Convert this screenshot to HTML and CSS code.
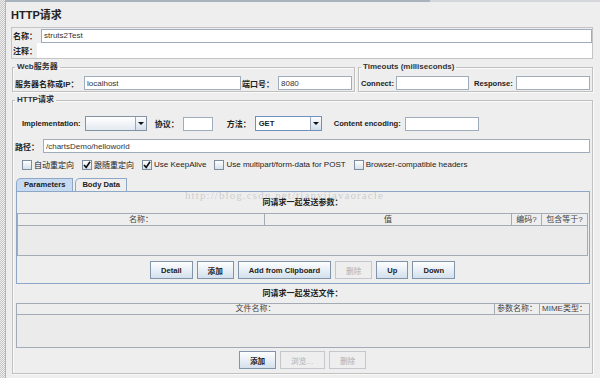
FILE: index.html
```html
<!DOCTYPE html>
<html lang="zh-CN">
<head>
    <meta charset="UTF-8">
    <meta name="viewport" content="width=device-width, initial-scale=1.0">
    <title>HTTP请求</title>
    <link rel="stylesheet" href="styles.css">
</head>
<body>
    <div class="window">
        <!-- barra lateral pontilhada -->
        <div class="sidebar"></div>

        <div class="main">
            <div class="topbar"></div>
            <h1 class="title">HTTP请求</h1>

            <!-- nome e comentário -->
            <div class="name-box">
                <div class="name-row">
                    <span class="label name-label">名称：</span>
                    <input class="text-field grow" type="text" value="struts2Test">
                </div>
                <div class="name-row">
                    <span class="label comment-label">注释：</span>
                    <input class="plain-field" type="text" value="">
                </div>
            </div>

            <div class="server-row">
                <fieldset class="group web-group">
                    <legend>Web服务器</legend>
                    <div class="field-row">
                        <span class="label server-label">服务器名称或IP：</span>
                        <input class="text-field server-field" type="text" value="localhost">
                        <span class="label port-label">端口号：</span>
                        <input class="text-field grow" type="text" value="8080">
                    </div>
                </fieldset>
                <fieldset class="group timeout-group">
                    <legend>Timeouts (milliseconds)</legend>
                    <div class="field-row">
                        <span class="label en connect-label">Connect:</span>
                        <input class="text-field timeout-field" type="text">
                        <span class="label en response-label">Response:</span>
                        <input class="text-field grow" type="text">
                    </div>
                </fieldset>
            </div>

            <fieldset class="group http-group">
                <legend>HTTP请求</legend>

                <div class="request-row">
                    <span class="label en">Implementation:</span>
                    <div class="combo impl-combo">
                        <span class="combo-value"></span>
                        <span class="combo-arrow"></span>
                    </div>
                    <span class="label protocol-label">协议：</span>
                    <input class="text-field protocol-field" type="text">
                    <span class="label method-label">方法：</span>
                    <div class="combo method-combo">
                        <span class="combo-value">GET</span>
                        <span class="combo-arrow"></span>
                    </div>
                    <span class="label en encoding-label">Content encoding:</span>
                    <input class="text-field encoding-field" type="text">
                </div>

                <div class="path-row">
                    <span class="label">路径：</span>
                    <input class="text-field grow" type="text" value="/chartsDemo/helloworld">
                </div>

                <div class="check-row">
                    <label class="check"><span class="box"></span>自动重定向</label>
                    <label class="check"><span class="box"><svg width="8" height="8" viewBox="0 0 8 8"><path d="M1 4 L3.2 6.4 L7 0.8" /></svg></span>跟随重定向</label>
                    <label class="check"><span class="box"><svg width="8" height="8" viewBox="0 0 8 8"><path d="M1 4 L3.2 6.4 L7 0.8" /></svg></span>Use KeepAlive</label>
                    <label class="check"><span class="box"></span>Use multipart/form-data for POST</label>
                    <label class="check"><span class="box"></span>Browser-compatible headers</label>
                </div>

                <!-- abas -->
                <div class="tabs">
                    <span class="tab active">Parameters</span>
                    <span class="tab">Body Data</span>
                </div>
                <div class="tab-panel">
                    <div class="watermark">http://blog.csdn.net/tianyijavaoracle</div>
                    <div class="section-title">同请求一起发送参数：</div>
                    <div class="table">
                        <div class="table-head">
                            <span class="cell col-name">名称：</span>
                            <span class="cell col-value">值</span>
                            <span class="cell col-encode">编码?</span>
                            <span class="cell col-equals">包含等于?</span>
                        </div>
                        <div class="table-body params-body"></div>
                    </div>
                    <div class="button-row">
                        <button class="btn">Detail</button>
                        <button class="btn">添加</button>
                        <button class="btn">Add from Clipboard</button>
                        <button class="btn disabled">删除</button>
                        <button class="btn">Up</button>
                        <button class="btn">Down</button>
                    </div>
                </div>

                <div class="section-title files-title">同请求一起发送文件：</div>
                <div class="table files-table">
                    <div class="table-head">
                        <span class="cell col-file">文件名称：</span>
                        <span class="cell col-param">参数名称：</span>
                        <span class="cell col-mime">MIME类型：</span>
                    </div>
                    <div class="table-body files-body"></div>
                </div>
                <div class="button-row files-buttons">
                    <button class="btn">添加</button>
                    <button class="btn disabled">浏览…</button>
                    <button class="btn disabled">删除</button>
                </div>
            </fieldset>
        </div>
    </div>
</body>
</html>
```

FILE: styles.css
```css
/* Reset básico */
* {
    margin: 0;
    padding: 0;
    box-sizing: border-box;
}

body {
    font-family: "Liberation Sans", "Noto Sans CJK SC", sans-serif;
    font-size: 8px;
    color: #222;
    background: #eeeeee;
    width: 600px;
    height: 378px;
    overflow: hidden;
}

.window {
    display: flex;
    height: 378px;
}

/* Barra lateral pontilhada */
.sidebar {
    flex: none;
    width: 6px;
    background: repeating-conic-gradient(#c6c6c6 0 25%, #eeeeee 0 50%) 0 0 / 2px 2px;
    border-right: 1px solid #b4b4b4;
}

.main {
    flex: 1;
    min-width: 0;
    padding: 0 7px 0 5px;
}

.topbar {
    height: 2px;
    margin: 0 -7px 0 -5px;
    background: linear-gradient(to right, #a9b3bd 0 424px, #d3d7db 424px);
}

.title {
    margin-top: 5px;
    font-size: 11px;
    line-height: 16px;
    font-weight: bold;
    color: #222;
}

.label {
    flex: none;
    font-weight: bold;
    white-space: nowrap;
}

.label.en {
    font-size: 7.6px;
}

input {
    font: inherit;
    color: #333;
    outline: none;
}

.text-field {
    flex: none;
    height: 14px;
    border: 1px solid #9eacbb;
    background: #fff;
    padding: 0 2px;
}

.grow {
    flex: 1 1 0;
    min-width: 0;
}

/* Nome e comentário */
.name-box {
    margin-top: 4px;
    border: 1px solid #c4c4c4;
}

.name-row {
    display: flex;
    align-items: center;
    height: 15px;
}

.name-label {
    width: 29px;
    padding-left: 1px;
}

.comment-label {
    width: 25px;
    padding-left: 1px;
}

.plain-field {
    flex: 1 1 0;
    min-width: 0;
    height: 15px;
    border: none;
    background: #fff;
}

/* Grupos */
.server-row {
    display: flex;
    gap: 3px;
    margin-top: 3px;
    margin-left: 1px;
}

.group {
    border: 1px solid #c0c0c0;
    box-shadow: inset 1px 1px 0 #fafafa, 1px 1px 0 #fafafa;
    padding: 4px 2px 1px 2px;
    min-width: 0;
}

.group legend {
    font-weight: bold;
    font-size: 8px;
    line-height: 10px;
    padding: 0 2px;
    color: #333;
}

.web-group {
    flex: 0 0 343px;
}

.timeout-group {
    flex: 1;
}

.field-row {
    display: flex;
    align-items: center;
    height: 14px;
}

.server-label {
    width: 69px;
}

.server-field {
    width: 157px;
}

.port-label {
    width: 37px;
    padding-left: 1px;
}

.connect-label {
    width: 35px;
}

.timeout-field {
    width: 73px;
}

.response-label {
    width: 42px;
    margin-left: 5px;
}

/* Grupo HTTP */
.http-group {
    margin-top: 3px;
    margin-left: 1px;
    padding: 11px 2px 4px 2px;
}

.request-row {
    display: flex;
    align-items: center;
    gap: 4px;
    height: 15px;
    padding-left: 7px;
}

.combo {
    flex: none;
    display: flex;
    height: 15px;
    border: 1px solid #8493a3;
    background: linear-gradient(#ffffff, #e3e9f0);
}

.combo-value {
    flex: 1;
    padding-left: 3px;
    line-height: 13px;
    font-weight: bold;
    font-size: 7.6px;
}

.combo-arrow {
    width: 11px;
    border-left: 1px solid #9aa9b8;
    background: linear-gradient(#fbfdff, #d3dfeb);
    display: flex;
    align-items: center;
    justify-content: center;
}

.combo-arrow::after {
    content: "";
    border-left: 3px solid transparent;
    border-right: 3px solid transparent;
    border-top: 3px solid #111;
}

.impl-combo {
    width: 62px;
}

.protocol-label {
    margin-left: 4px;
}

.protocol-field {
    width: 30px;
}

.method-label {
    margin-left: 10px;
}

.method-combo {
    width: 67px;
    background: #fff;
    border-color: #6f8fbd;
}

.encoding-label {
    margin-left: 8px;
}

.encoding-field {
    width: 74px;
}

.path-row {
    display: flex;
    align-items: center;
    gap: 4px;
    margin-top: 8px;
    height: 14px;
}

/* Caixas de seleção */
.check-row {
    display: flex;
    align-items: center;
    gap: 8px;
    height: 13px;
    margin-top: 5px;
    padding-left: 7px;
}

.check {
    display: flex;
    align-items: center;
    gap: 2px;
    white-space: nowrap;
}

.box {
    width: 10px;
    height: 10px;
    border: 1px solid #7d8d9d;
    background: linear-gradient(#ffffff, #d5dfea);
    display: flex;
    align-items: center;
    justify-content: center;
}

.box path {
    fill: none;
    stroke: #111;
    stroke-width: 1.6;
}

/* Abas */
.tabs {
    display: flex;
    gap: 2px;
    margin-top: 7px;
    margin-left: 1px;
    height: 13px;
}

.tab {
    padding: 0 6px;
    line-height: 12px;
    font-weight: bold;
    font-size: 7.6px;
    border: 1px solid #8ea7c6;
    border-bottom: none;
    border-top-left-radius: 5px;
    background: #eeeeee;
}

.tab.active {
    padding: 0 7px;
    background: #c6daf1;
}

.tab-panel {
    position: relative;
    margin-left: 1px;
    border: 1px solid #8ea7c6;
    padding: 0 1px 4px 0;
}

.watermark {
    position: absolute;
    left: 168px;
    top: -3px;
    font-family: "Liberation Serif", serif;
    font-size: 11px;
    letter-spacing: 1.1px;
    color: rgba(150, 150, 150, 0.4);
    white-space: nowrap;
}

.section-title {
    margin-top: 5px;
    line-height: 12px;
    text-align: center;
    font-weight: bold;
}

/* Tabelas */
.table {
    margin-top: 4px;
    border: 1px solid #a3acb6;
}

.table-head {
    display: flex;
    height: 12px;
    border-bottom: 1px solid #a3acb6;
}

.cell {
    flex: none;
    line-height: 11px;
    text-align: center;
    color: #444;
    white-space: nowrap;
    border-right: 1px solid #a3acb6;
}

.cell:last-child {
    border-right: none;
}

.col-name,
.col-value {
    width: 247px;
}

.col-encode {
    width: 30px;
}

.col-equals {
    flex: 1;
}

.table-body {
    background: #ebebeb;
}

.params-body {
    height: 29px;
}

.files-title {
    margin-top: 4px;
    line-height: 11px;
}

.files-table {
    margin-left: 1px;
}

.files-table .table-head {
    height: 11px;
}

.files-table .cell {
    line-height: 10px;
}

.col-file {
    width: 478px;
}

.col-param {
    width: 45px;
}

.col-mime {
    flex: 1;
}

.files-body {
    height: 32px;
}

/* Botões */
.button-row {
    display: flex;
    justify-content: center;
    gap: 4px;
    margin-top: 5px;
}

.files-buttons {
    margin-top: 3px;
}

.btn {
    height: 18px;
    padding: 0 10px;
    border: 1px solid #8194a9;
    background: linear-gradient(#fdfeff, #d3e0ed);
    font-family: inherit;
    font-size: 7.6px;
    font-weight: bold;
    color: #222;
}

.btn.disabled {
    border-color: #c4c8cc;
    background: #eeeeee;
    color: #aeaeae;
    font-weight: normal;
}
```
